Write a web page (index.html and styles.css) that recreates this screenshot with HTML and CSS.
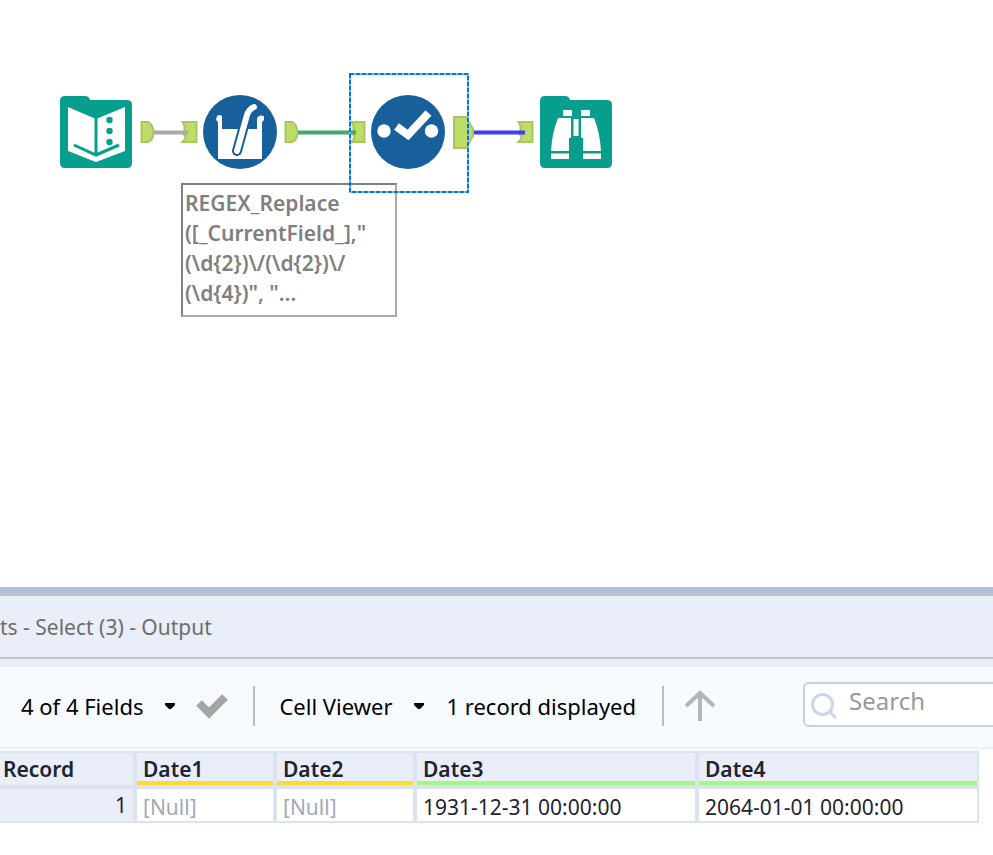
FILE: index.html
```html
<!DOCTYPE html>
<html lang="en">
<head>
<meta charset="utf-8">
<title>Workflow</title>
<link rel="stylesheet" href="styles.css">
</head>
<body>
<main class="canvas">
  <svg class="wires" aria-hidden="true">
    <g class="anchor">
      <path d="M141.500 122h7q5 4 5 10.500t-5 9.500h-7z"/>
      <path d="M182.500 122h14v20h-14q3-3 3-6l-3-3 2-3q1-4-2-8z"/>
      <path d="M285.500 122h7q5 4 5 10.500t-5 9.500h-7z"/>
      <path d="M351.500 122h13v20h-13q3-3 3-6l-3-3 2-3q1-4-2-8z"/>
      <path d="M454 117h12l7 12v7l-7 12h-12z"/>
      <path d="M518.500 122h14v20h-14q3-3 3-6l-3-3 2-3q1-4-2-8z"/>
    </g>
    <path class="wire wire-grey" d="M154 132.500H188"/>
    <path class="wire wire-green" d="M298 132.500H356"/>
    <path class="wire wire-blue" d="M474 132.500H525"/>
  </svg>

  <button class="tool tool-input" aria-label="Text Input">
    <svg viewBox="0 0 72 74">
      <path class="folder" d="M5 1H25Q29 1 30 5H67Q72 5 72 10V68Q72 73 67 73H5Q0 73 0 68V6Q0 1 5 1Z"/>
      <path class="light" d="M8 12L36 24L65 12V56L36 67L8 56Z"/>
      <path class="teal-line" d="M36 23V60M14 50L36 60L59 50"/>
      <g class="teal"><circle cx="49.500" cy="25" r="3.200"/><circle cx="49.500" cy="36" r="3.200"/><circle cx="49.500" cy="47" r="3.200"/></g>
    </svg>
  </button>

  <button class="tool tool-formula" aria-label="Multi-Field Formula">
    <svg viewBox="0 0 74 74">
      <circle class="disc" cx="37" cy="37" r="37"/>
      <path class="light" d="M14 21Q16 19 19 21V34H54V24Q55 19 61 21V25L59 27V64H15V27L13 25Z"/>
      <path class="rod-edge" d="M34 56L44 20Q46 14 51 12"/>
      <path class="rod" d="M34 56L44 20Q46 14 51 12"/>
    </svg>
  </button>

  <p class="note">REGEX_Replace<br>([_CurrentField_],"<br>(\d{2})\/(\d{2})\/<br>(\d{4})", "...</p>

  <button class="tool tool-select" aria-label="Select">
    <svg viewBox="0 0 74 74">
      <circle class="disc" cx="37" cy="37" r="37"/>
      <g class="light"><circle cx="13" cy="36" r="6.700"/><circle cx="60.500" cy="36" r="6.700"/></g>
      <path class="tick" d="M25.500 31.500L37 40L57.500 18"/>
    </svg>
  </button>
  <svg class="selection" aria-hidden="true"><rect x="1" y="1" width="118" height="118"/><rect class="dash" x="1" y="1" width="118" height="118"/></svg>

  <button class="tool tool-browse" aria-label="Browse">
    <svg viewBox="0 0 72 74">
      <path class="folder" d="M5 1H25Q29 1 30 5H67Q72 5 72 10V68Q72 73 67 73H5Q0 73 0 68V6Q0 1 5 1Z"/>
      <path class="light" d="M23 15H32V21H23ZM41 15H50V21H41ZM18 23H31V43H29V56H11Q12 38 18 23ZM54 23H41V43H43V56H61Q60 38 54 23ZM33.500 24H38.500V41H33.500ZM11 58.500H29V64H11ZM43 58.500H61V64H43Z"/>
    </svg>
  </button>
</main>

<section class="results">
  <h1 class="title">ts - Select (3) - Output</h1>
  <div class="toolbar">
    <button class="menu fields">4 of 4 Fields<svg class="caret" viewBox="0 0 10 6"><path d="M0 0H10V2L6 6H4L0 2Z"/></svg></button>
    <button class="icon apply" aria-label="Apply"><svg viewBox="0 0 34 28"><path class="apply-mark" d="M4 11L14 21L30 5"/></svg></button>
    <span class="divider"></span>
    <button class="menu viewer">Cell Viewer<svg class="caret" viewBox="0 0 10 6"><path d="M0 0H10V2L6 6H4L0 2Z"/></svg></button>
    <span class="count">1 record displayed</span>
    <span class="divider"></span>
    <button class="icon up" aria-label="Previous"><svg viewBox="0 0 32 32"><path class="arrow" d="M16 31V3M2 16L16 3L30 16"/></svg></button>
    <label class="search">
      <svg viewBox="0 0 26 26"><circle cx="11.500" cy="11.500" r="10"/><path d="M19 19L25 25"/></svg>
      <input type="search" placeholder="Search" aria-label="Search">
    </label>
  </div>
  <table class="grid">
    <colgroup><col class="c-record"><col class="c-short"><col class="c-short"><col class="c-long"><col class="c-last"></colgroup>
    <thead><tr><th>Record</th><th class="warn">Date1</th><th class="warn">Date2</th><th class="good">Date3</th><th class="good">Date4</th></tr></thead>
    <tbody><tr><td class="index">1</td><td class="null">[Null]</td><td class="null">[Null]</td><td>1931-12-31 00:00:00</td><td>2064-01-01 00:00:00</td></tr></tbody>
  </table>
</section>
</body>
</html>
```
FILE: styles.css
```css
* { box-sizing: border-box; }

body {
  margin: 0;
  min-height: 100vh;
  display: flex;
  flex-direction: column;
  overflow-x: hidden;
  background: #fff;
  color: #1f2433;
  font-family: "Noto Sans", "Open Sans", sans-serif;
  font-size: 21px;
}

button {
  border: 0;
  padding: 0;
  background: none;
  color: #000;
  font: inherit;
}

svg { display: block; fill: none; }

/* Workflow canvas */
.canvas { position: relative; flex: 1; min-height: 340px; }
.wires { position: absolute; inset: 0; width: 100%; height: 100%; }
.anchor { fill: #bddd66; stroke: #a8c763; stroke-width: 2; }
.wire { stroke-width: 4; }
.wire-grey { stroke: #aaa; }
.wire-green { stroke: #40aa66; }
.wire-blue { stroke: #3f3ff2; }

.tool { position: absolute; width: 74px; height: 74px; }
.tool svg { width: 100%; height: 100%; }
.tool-input { left: 60px; top: 95px; width: 72px; }
.tool-formula { left: 203px; top: 95px; }
.tool-select { left: 371px; top: 95px; }
.tool-browse { left: 540px; top: 95px; width: 72px; }

.folder, .teal { fill: #069f8d; }
.teal-line { stroke: #069f8d; stroke-width: 3; }
.disc { fill: #17609c; }
.light { fill: #fff; }
.rod-edge, .rod { stroke-linecap: round; }
.rod-edge { stroke: #17609c; stroke-width: 10; }
.rod { stroke: #fff; stroke-width: 6; }
.tick { stroke: #fff; stroke-width: 8; }

.selection { position: absolute; left: 349px; top: 73px; width: 120px; height: 120px; pointer-events: none; }
.selection rect { stroke: #78bcf0; stroke-width: 2; }
.selection .dash { stroke: #0078d7; stroke-dasharray: 4 2; }

.note {
  position: absolute;
  left: 181px;
  top: 183px;
  width: 216px;
  margin: 0;
  padding: 3px 2px 7px;
  border: 2px solid #808080;
  border-right-color: #aaa;
  border-bottom-color: #aaa;
  color: #808080;
  font-size: 21px;
  font-weight: 600;
  line-height: 30px;
  white-space: nowrap;
}

/* Results panel */
.results { border-top: 6px solid #aebfe0; padding-bottom: 32px; overflow: hidden; }

.title {
  margin: 0;
  padding: 0;
  height: 74px;
  border-top: 3px solid #c3c3c3;
  border-bottom: 8px solid #e9eef9;
  box-shadow: inset 0 -2px #c3c3c3;
  background: #e9eef9;
  color: #6d6d6d;
  font-size: 21px;
  font-weight: 400;
  line-height: 62px;
}

.toolbar {
  display: flex;
  align-items: center;
  height: 84px;
  padding: 0 0 4px 21px;
  border-bottom: 2px solid #f7faff;
  box-shadow: inset 0 -2px #f0f0f0;
  background: #f7faff;
  color: #000;
  font-size: 22px;
  white-space: nowrap;
}

.menu { display: flex; align-items: center; gap: 22px; }
.caret { width: 10px; height: 6px; fill: #000; }
.apply { margin: 0 24px 0 20px; }
.apply svg { width: 34px; height: 28px; }
.apply-mark { stroke: #a5a5a5; stroke-width: 8; }
.divider { flex: none; width: 2px; height: 40px; background: #bdbdbd; }
.viewer { margin: 0 22px 0 24px; }
.count { margin-right: 26px; }
.up { margin-left: 20px; }
.up svg { width: 32px; height: 32px; }
.arrow { stroke: #b5b5b5; stroke-width: 4; }

.search {
  display: flex;
  align-self: flex-start;
  flex: 1;
  min-width: 0;
  gap: 12px;
  height: 45px;
  margin: 15px -8px 0 87px;
  padding: 9px 0 0 6px;
  border: 2px solid #c5d0e6;
  border-radius: 6px;
  background: #fff;
}
.search svg { flex: none; width: 26px; height: 26px; stroke: #cbd6ec; stroke-width: 3; }
.search input {
  flex: 1;
  min-width: 0;
  height: 30px;
  margin-top: -8px;
  padding: 0;
  border: 0;
  outline: 0;
  background: none;
  font: inherit;
  font-size: 24px;
}
.search input::placeholder { color: #999; opacity: 1; }

.grid { table-layout: fixed; width: 979px; border-spacing: 0; line-height: 32px; }
.c-record { width: 137px; }
.c-short { width: 140px; }
.c-long { width: 282px; }
.c-last { width: 280px; }
.grid th, .grid td {
  height: 34px;
  padding: 0 6px;
  border: 0 solid #dbe2f0;
  border-width: 0 4px 2px 0;
  text-align: left;
}
.grid td { padding-top: 4px; line-height: 28px; }
.grid th {
  height: 38px;
  border-width: 2px 4px 4px 0;
  background: #e9eef9;
  font-weight: 600;
}
.grid th:first-child { padding-left: 3px; }
.grid th:last-child, .grid td:last-child { border-right-width: 2px; }
.grid .warn { box-shadow: inset 0 -4px #ffdb2e; }
.grid .good { box-shadow: inset 0 -4px #a0fa7d; }
.grid .index { padding-top: 0; background: #e9eef9; text-align: right; }
.grid .null { color: #a3a8b8; }
```
